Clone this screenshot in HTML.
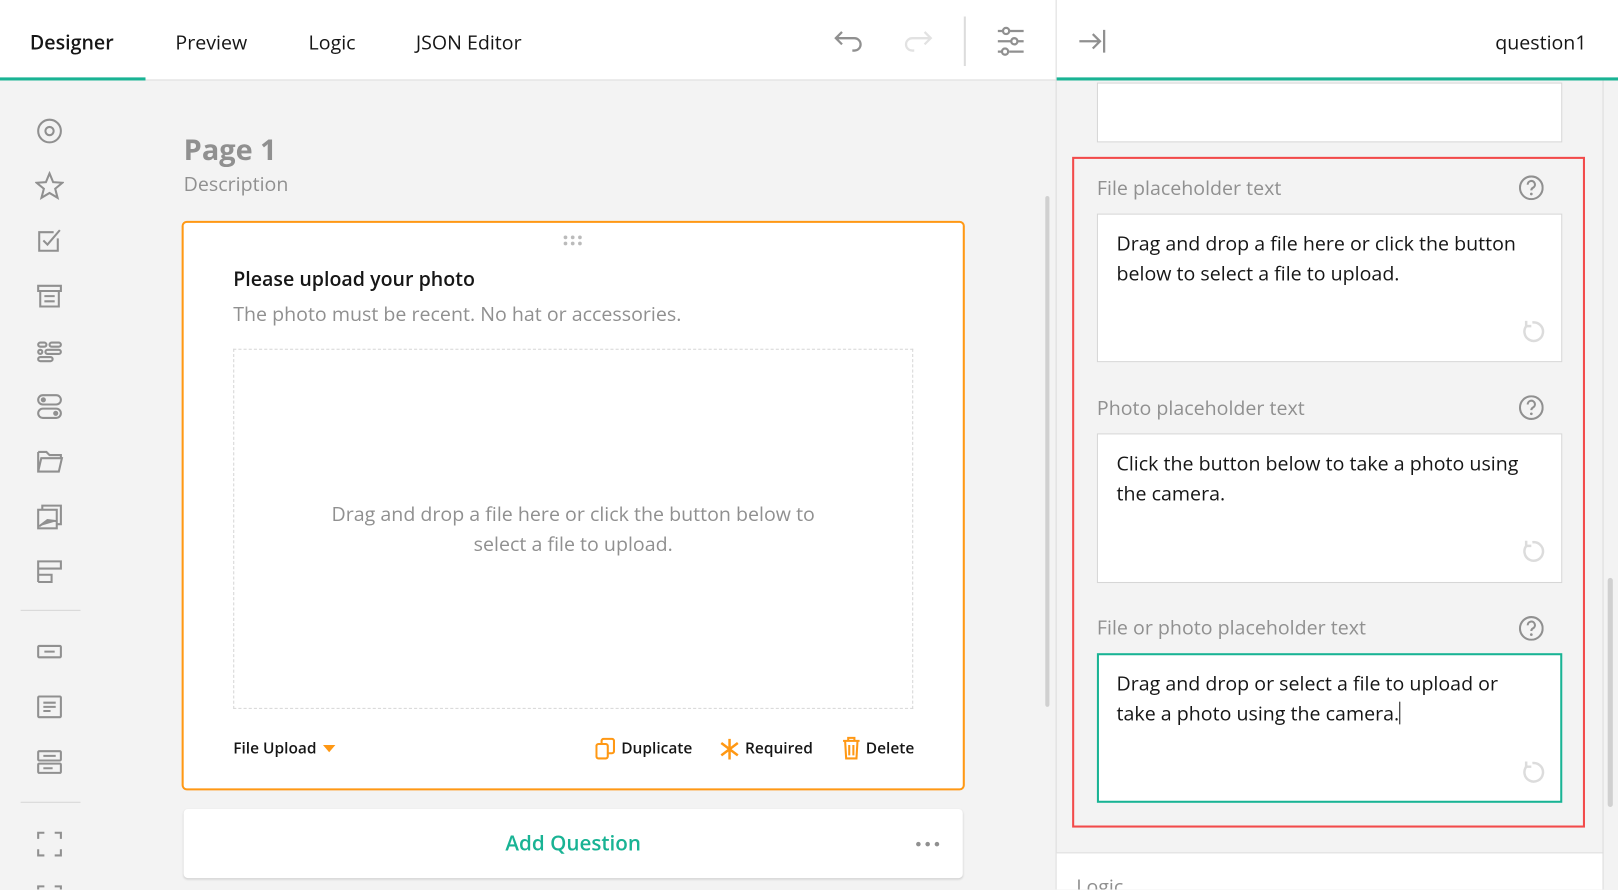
<!DOCTYPE html>
<html><head><style>
html,body{margin:0;padding:0;overflow:hidden;width:1618px;height:889px;background:#f3f3f3}
#w{position:absolute;left:0;top:0;width:1568px;height:862px;transform:scale(1.03189);transform-origin:0 0;font-family:"Open Sans","Liberation Sans",sans-serif;background:#f3f3f3;overflow:hidden}
.a{position:absolute}
.tab{position:absolute;top:28px;font-size:19px;color:#161616}
.ico{position:absolute;left:34px;width:28px;height:28px}
.lbl{position:absolute;left:1063px;font-size:19px;color:#909090}
.ta{position:absolute;left:1063px;width:451px;background:#fff;border:1px solid #d6d6d6;box-sizing:border-box;padding:14px 18px;font-size:19px;line-height:29px;color:#161616}
.q{position:absolute;left:1472px;width:24px;height:24px}
</style></head><body><div id="w">
<div class="a" style="left:0;top:0;width:1568px;height:77px;background:#fff;border-bottom:1px solid #dcdcdc"></div>
<div class="tab" style="left:29px;font-weight:600">Designer</div>
<div class="a" style="left:0;top:75px;width:141px;height:3px;background:#19b394"></div>
<div class="tab" style="left:170px">Preview</div>
<div class="tab" style="left:299px">Logic</div>
<div class="tab" style="left:403px">JSON Editor</div>
<svg class="a" style="left:806px;top:26px" width="32" height="28" viewBox="0 0 32 28"><path d="M10 5 L4 11 L10 17 M4 11 H22 a6 6 0 0 1 0 12 h-2" fill="none" stroke="#909090" stroke-width="2.2"/></svg>
<svg class="a" style="left:874px;top:26px" width="32" height="28" viewBox="0 0 32 28"><path d="M22 5 L28 11 L22 17 M28 11 H10 a6 6 0 0 0 0 12 h2" fill="none" stroke="#e2e2e2" stroke-width="2.2"/></svg>
<div class="a" style="left:934px;top:16px;width:2px;height:48px;background:#dcdcdc"></div>
<svg class="a" style="left:964px;top:24px" width="32" height="32" viewBox="0 0 32 32" fill="none" stroke="#909090" stroke-width="2.2"><path d="M3 6h5M14 6h14M3 16h13M22 16h6M3 26h4M14 26h14"/><circle cx="11" cy="6" r="3"/><circle cx="19" cy="16" r="3"/><circle cx="10" cy="26" r="3"/></svg>
<div class="a" style="left:1023px;top:0;width:1px;height:862px;background:#dcdcdc"></div>
<div class="a" style="left:1024px;top:75px;width:544px;height:3px;background:#19b394"></div>
<svg class="a" style="left:1044px;top:26px" width="30" height="28" viewBox="0 0 30 28" fill="none" stroke="#909090" stroke-width="2.2"><path d="M2 14h20M15 7l7 7-7 7M26 3v22"/></svg>
<div class="a" style="left:1449px;top:28px;font-size:19px;color:#161616">question1</div>
<svg class="ico" style="top:113px" viewBox="0 0 28 28" fill="none" stroke="#909090" stroke-width="2"><circle cx="14" cy="14" r="11"/><circle cx="14" cy="14" r="4"/></svg>
<svg class="ico" style="top:166px" viewBox="0 0 28 28" fill="none" stroke="#909090" stroke-width="2"><path d="M14 2l3.5 8.5 9 .6-7 5.8 2.3 8.8L14 21l-7.8 4.7 2.3-8.8-7-5.8 9-.6z"/></svg>
<svg class="ico" style="top:219px" viewBox="0 0 28 28" fill="none" stroke="#909090" stroke-width="2"><path d="M22 12v12H4V6h14"/><path d="M8 14l4 4 12-14"/></svg>
<svg class="ico" style="top:273px" viewBox="0 0 28 28" fill="none" stroke="#909090" stroke-width="2"><path d="M3 4h22v5H3zM5 9v15h18V9M9 14h10M9 19h10"/></svg>
<svg class="ico" style="top:327px" viewBox="0 0 28 28" fill="none" stroke="#909090" stroke-width="2"><rect x="3" y="5" width="8" height="4" rx="2"/><rect x="14" y="5" width="11" height="4" rx="2"/><rect x="3" y="12" width="4" height="4" rx="2"/><rect x="10" y="12" width="15" height="4" rx="2"/><rect x="3" y="19" width="14" height="4" rx="2"/></svg>
<svg class="ico" style="top:380px" viewBox="0 0 28 28" fill="none" stroke="#909090" stroke-width="2"><rect x="3" y="3" width="22" height="9" rx="4.5"/><rect x="3" y="16" width="22" height="9" rx="4.5"/><circle cx="8" cy="7.5" r="1.5" fill="#909090"/><circle cx="20" cy="20.5" r="1.5" fill="#909090"/></svg>
<svg class="ico" style="top:433px" viewBox="0 0 28 28" fill="none" stroke="#909090" stroke-width="2"><path d="M3 5h8l3 3h11v3M3 5v19h20l3-13H6L3 24"/></svg>
<svg class="ico" style="top:487px" viewBox="0 0 28 28" fill="none" stroke="#909090" stroke-width="2"><rect x="3" y="7" width="18" height="18"/><path d="M7 7V3h18v18h-4"/><path d="M4 23l8-6 9 1" fill="#909090"/></svg>
<svg class="ico" style="top:540px" viewBox="0 0 28 28" fill="none" stroke="#909090" stroke-width="2"><path d="M3 4h22v7H3zM3 11v13M3 17h13v7H3"/></svg>
<div class="a" style="left:20px;top:591px;width:58px;height:1px;background:#d6d6d6"></div>
<svg class="ico" style="top:618px" viewBox="0 0 28 28" fill="none" stroke="#909090" stroke-width="2"><rect x="3" y="8" width="22" height="11" rx="1"/><path d="M9 13.5h10"/></svg>
<svg class="ico" style="top:671px" viewBox="0 0 28 28" fill="none" stroke="#909090" stroke-width="2"><rect x="3" y="4" width="22" height="20" rx="1"/><path d="M8 10h12M8 14h12M8 18h7"/></svg>
<svg class="ico" style="top:725px" viewBox="0 0 28 28" fill="none" stroke="#909090" stroke-width="2"><rect x="3" y="3" width="22" height="9" rx="1"/><rect x="3" y="15" width="22" height="9" rx="1"/><path d="M8 7.5h12M8 19.5h9"/></svg>
<div class="a" style="left:20px;top:777px;width:58px;height:1px;background:#d6d6d6"></div>
<svg class="ico" style="top:804px" viewBox="0 0 28 28" fill="none" stroke="#909090" stroke-width="2"><path d="M3 9V3h6M19 3h6v6M25 19v6h-6M9 25H3v-6"/></svg>
<svg class="ico" style="top:856px" viewBox="0 0 28 28" fill="none" stroke="#909090" stroke-width="2"><path d="M3 9V3h6M19 3h6v6"/></svg>
<div class="a" style="left:178px;top:126px;font-size:28px;font-weight:bold;color:#909090">Page 1</div>
<div class="a" style="left:178px;top:165px;font-size:19px;color:#909090">Description</div>
<div class="a" style="left:1013px;top:190px;width:4px;height:495px;background:#d0d0d0;border-radius:2px"></div>
<div class="a" style="left:176px;top:214px;width:759px;height:552px;box-sizing:border-box;border:2px solid #ff9814;border-radius:5px;background:#fff"></div>
<svg class="a" style="left:545px;top:227px" width="20" height="12"><g fill="#bbb"><circle cx="3" cy="3" r="1.8"/><circle cx="10" cy="3" r="1.8"/><circle cx="17" cy="3" r="1.8"/><circle cx="3" cy="9" r="1.8"/><circle cx="10" cy="9" r="1.8"/><circle cx="17" cy="9" r="1.8"/></g></svg>
<div class="a" style="left:226px;top:257px;font-size:19px;font-weight:600;color:#161616">Please upload your photo</div>
<div class="a" style="left:226px;top:291px;font-size:19px;color:#909090">The photo must be recent. No hat or accessories.</div>
<div class="a" style="left:226px;top:338px;width:659px;height:349px;box-sizing:border-box;border:1px dashed #d6d6d6"></div>
<div class="a" style="left:226px;top:484px;width:659px;text-align:center;font-size:19px;line-height:29px;color:#909090">Drag and drop a file here or click the button below to<br>select a file to upload.</div>
<div class="a" style="left:226px;top:715px;font-size:15px;font-weight:600;color:#161616">File Upload</div>
<svg class="a" style="left:312px;top:721px" width="14" height="9"><path d="M1 1h12L7 8z" fill="#ff9814"/></svg>
<svg class="a" style="left:577px;top:715px" width="20" height="22" fill="none" stroke="#ff9814" stroke-width="2"><rect x="1" y="6" width="11" height="14" rx="2"/><path d="M6 6V3a2 2 0 0 1 2-2h8a2 2 0 0 1 2 2v10a2 2 0 0 1-2 2h-4"/></svg>
<div class="a" style="left:602px;top:715px;font-size:15px;font-weight:600;color:#161616">Duplicate</div>
<svg class="a" style="left:697px;top:715px" width="20" height="22" stroke="#ff9814" stroke-width="2.4"><path d="M10 1v20M2 5l16 12M18 5L2 17"/></svg>
<div class="a" style="left:722px;top:715px;font-size:15px;font-weight:600;color:#161616">Required</div>
<svg class="a" style="left:816px;top:714px" width="18" height="22" fill="none" stroke="#ff9814" stroke-width="2"><path d="M1 4h16M6 4V1h6v3M3 4l1 17h10l1-17M7 8v10M11 8v10"/></svg>
<div class="a" style="left:839px;top:715px;font-size:15px;font-weight:600;color:#161616">Delete</div>
<div class="a" style="left:178px;top:784px;width:755px;height:67px;background:#fff;border-radius:4px;box-shadow:0 1px 2px rgba(0,0,0,.15)"></div>
<div class="a" style="left:178px;top:803px;width:755px;text-align:center;font-size:20px;font-weight:600;color:#19b394">Add Question</div>
<svg class="a" style="left:886px;top:814px" width="28" height="8" fill="#909090"><circle cx="4" cy="4" r="2.2"/><circle cx="13" cy="4" r="2.2"/><circle cx="22" cy="4" r="2.2"/></svg>
<div class="a" style="left:1063px;top:80px;width:451px;height:58px;background:#fff;border:1px solid #d6d6d6;box-sizing:border-box"></div>
<div class="a" style="left:1039px;top:152px;width:497px;height:650px;box-sizing:border-box;border:2px solid #f24a4a"></div>
<div class="lbl" style="top:169px">File placeholder text</div>
<div class="lbl" style="top:382px">Photo placeholder text</div>
<div class="lbl" style="top:595px">File or photo placeholder text</div>
<svg class="q" style="top:170px" viewBox="0 0 24 24"><circle cx="12" cy="12" r="11" fill="none" stroke="#909090" stroke-width="2"/><path d="M8.5 9a3.5 3.5 0 1 1 5 3c-1 .6-1.5 1-1.5 2.5" fill="none" stroke="#909090" stroke-width="2"/><circle cx="12" cy="18" r="1.3" fill="#909090"/></svg>
<svg class="q" style="top:383px" viewBox="0 0 24 24"><circle cx="12" cy="12" r="11" fill="none" stroke="#909090" stroke-width="2"/><path d="M8.5 9a3.5 3.5 0 1 1 5 3c-1 .6-1.5 1-1.5 2.5" fill="none" stroke="#909090" stroke-width="2"/><circle cx="12" cy="18" r="1.3" fill="#909090"/></svg>
<svg class="q" style="top:597px" viewBox="0 0 24 24"><circle cx="12" cy="12" r="11" fill="none" stroke="#909090" stroke-width="2"/><path d="M8.5 9a3.5 3.5 0 1 1 5 3c-1 .6-1.5 1-1.5 2.5" fill="none" stroke="#909090" stroke-width="2"/><circle cx="12" cy="18" r="1.3" fill="#909090"/></svg>
<div class="ta" style="top:207px;height:144px">Drag and drop a file here or click the button below to select a file to upload.</div>
<div class="ta" style="top:420px;height:145px">Click the button below to take a photo using the camera.</div>
<div class="ta" style="top:633px;height:145px;border:2px solid #19b394;padding:13px 50px 13px 17px">Drag and drop or select a file to upload or take a photo using the camera.<span style="display:inline-block;width:1px;height:22px;background:#161616;vertical-align:-4px"></span></div>
<svg class="a" style="left:1474px;top:309px" width="24" height="24" fill="none" stroke="#dcdcdc" stroke-width="2.4"><path d="M6 6a9 9 0 1 0 5-2.5"/><path d="M5 2v5h5"/></svg>
<svg class="a" style="left:1474px;top:522px" width="24" height="24" fill="none" stroke="#dcdcdc" stroke-width="2.4"><path d="M6 6a9 9 0 1 0 5-2.5"/><path d="M5 2v5h5"/></svg>
<svg class="a" style="left:1474px;top:736px" width="24" height="24" fill="none" stroke="#dcdcdc" stroke-width="2.4"><path d="M6 6a9 9 0 1 0 5-2.5"/><path d="M5 2v5h5"/></svg>
<div class="a" style="left:1024px;top:826px;width:530px;height:40px;background:#fff;border-top:1px solid #dcdcdc"></div>
<div class="a" style="left:1043px;top:846px;font-size:19px;color:#909090">Logic</div>
<div class="a" style="left:1553px;top:78px;width:1px;height:790px;background:#dcdcdc"></div>
<div class="a" style="left:1558px;top:560px;width:5px;height:222px;background:#d0d0d0;border-radius:3px"></div>
</div></body></html>
